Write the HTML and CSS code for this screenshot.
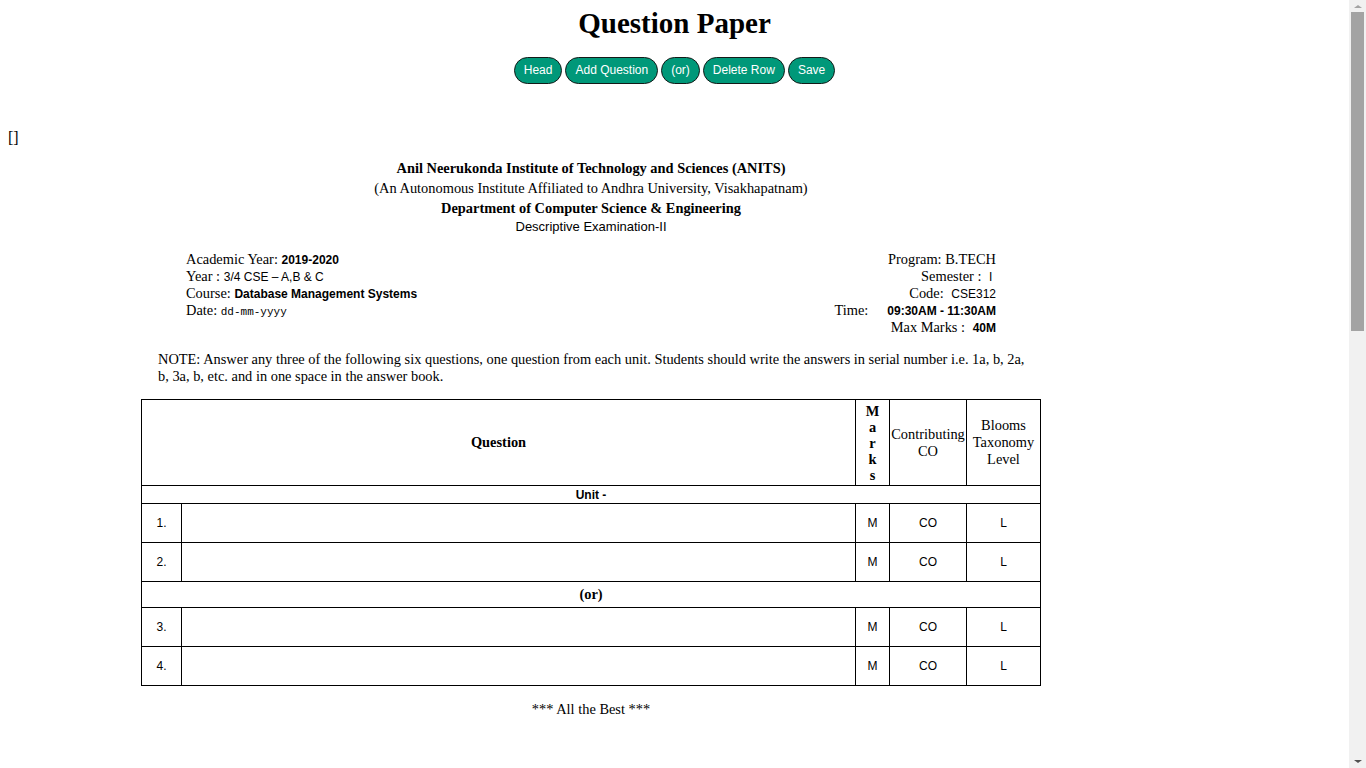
FILE: index.html
```html
<!DOCTYPE html>
<html>
<head>
<meta charset="utf-8">
<title>Question Paper</title>
<link rel="stylesheet" href="styles.css">
</head>
<body>
<h1 class="title">Question Paper</h1>
<div class="toolbar">
  <button class="btn">Head</button>
  <button class="btn">Add Question</button>
  <button class="btn">(or)</button>
  <button class="btn">Delete Row</button>
  <button class="btn">Save</button>
</div>
<p class="bracket">[]</p>
<div class="paper">
  <div class="inst">
    <div class="inst-name">Anil Neerukonda Institute of Technology and Sciences (ANITS)</div>
    <div class="inst-sub">(An Autonomous Institute Affiliated to Andhra University, Visakhapatnam)</div>
    <div class="inst-dept">Department of Computer Science &amp; Engineering</div>
    <div class="inst-exam">Descriptive Examination-II</div>
  </div>
  <div class="info">
    <div class="info-left">
      <div class="info-row">Academic Year: <span class="sans bold">2019-2020</span></div>
      <div class="info-row">Year : <span class="sans">3/4 CSE – A,B &amp; C</span></div>
      <div class="info-row">Course: <span class="sans bold">Database Management Systems</span></div>
      <div class="info-row">Date: <span class="mono">dd-mm-yyyy</span></div>
    </div>
    <div class="info-right">
      <div class="info-row">Program: B.TECH</div>
      <div class="info-row">Semester : <span class="sans gap">I</span>&nbsp;</div>
      <div class="info-row">Code: <span class="sans gap">CSE312</span></div>
      <div class="info-row">Time:<span class="sans bold wide">09:30AM - 11:30AM</span></div>
      <div class="info-row">Max Marks : <span class="sans bold gap">40M</span></div>
    </div>
  </div>
  <p class="note">NOTE: Answer any three of the following six questions, one question from each unit. Students should write the answers in serial number i.e. 1a, b, 2a, b, 3a, b, etc. and in one space in the answer book.</p>
  <table class="qtable">
    <colgroup>
      <col class="c-no">
      <col class="c-q">
      <col class="c-m">
      <col class="c-co">
      <col class="c-bl">
    </colgroup>
    <thead>
      <tr class="head-row">
        <th colspan="2">Question</th>
        <th><div class="marks-v">M<br>a<br>r<br>k<br>s</div></th>
        <td>Contributing CO</td>
        <td>Blooms Taxonomy Level</td>
      </tr>
    </thead>
    <tbody>
      <tr class="unit-row"><td colspan="5">Unit -</td></tr>
      <tr class="q-row"><td>1.</td><td></td><td>M</td><td>CO</td><td>L</td></tr>
      <tr class="q-row"><td>2.</td><td></td><td>M</td><td>CO</td><td>L</td></tr>
      <tr class="or-row"><td colspan="5">(or)</td></tr>
      <tr class="q-row"><td>3.</td><td></td><td>M</td><td>CO</td><td>L</td></tr>
      <tr class="q-row"><td>4.</td><td></td><td>M</td><td>CO</td><td>L</td></tr>
    </tbody>
  </table>
  <p class="best">*** All the Best ***</p>
</div>
<div class="page-end"></div>
<div class="scrollbar">
  <span class="sb-arrow sb-up"></span>
  <span class="sb-thumb"></span>
  <span class="sb-arrow sb-down"></span>
</div>
</body>
</html>
```
FILE: styles.css
```css
body {
  margin: 0 25px 8px 8px;
  font-family: "Liberation Serif", "Times New Roman", serif;
  font-size: 14.4px;
  color: #000;
  background: #fff;
}
.title {
  margin: 6px 0 0;
  font-size: 29px;
  line-height: 34px;
  font-weight: bold;
  text-align: center;
}
.toolbar {
  margin-top: 17px;
  display: flex;
  justify-content: center;
  gap: 3px;
}
.btn {
  font-family: "Liberation Sans", Arial, sans-serif;
  font-size: 12px;
  line-height: 15px;
  height: 27px;
  padding: 0 9px;
  color: #fff;
  background: #009879;
  border: 1px solid #141a18;
  border-radius: 14px;
  cursor: pointer;
}
.bracket {
  margin: 45px 0 11px;
  font-size: 16px;
  line-height: 18px;
}
.paper {
  width: 900px;
  margin-left: 133px;
}
.inst {
  text-align: center;
  line-height: 20px;
}
.inst-name, .inst-dept {
  font-weight: bold;
}
.inst-exam {
  font-family: "Liberation Sans", Arial, sans-serif;
  font-size: 13px;
  line-height: 18px;
}
.info {
  display: flex;
  justify-content: space-between;
  padding: 0 45px;
  margin-top: 15px;
}
.info-row {
  height: 17px;
  line-height: 17px;
  white-space: nowrap;
}
.info-row span {
  line-height: 12px;
}
.info-right {
  text-align: right;
}
.sans {
  font-family: "Liberation Sans", Arial, sans-serif;
  font-size: 12px;
}
.bold {
  font-weight: bold;
}
.mono {
  font-family: "Liberation Mono", "Courier New", monospace;
  font-size: 11px;
}
.gap {
  margin-left: 4px;
}
.wide {
  margin-left: 19px;
}
.note {
  margin: 15px 6px 14px 17px;
  line-height: 17px;
}
.qtable {
  width: 900px;
  table-layout: fixed;
  border-collapse: collapse;
}
.c-no { width: 40px; }
.c-m { width: 34px; }
.c-co { width: 77px; }
.c-bl { width: 74px; }
.qtable th,
.qtable td {
  border: 1px solid #000;
  padding: 0 1px;
  text-align: center;
  vertical-align: middle;
  line-height: 17px;
}
.head-row th,
.head-row td {
  height: 85px;
  padding: 0 1px;
}
.marks-v {
  line-height: 16px;
  font-weight: bold;
}
.unit-row td {
  height: 17px;
  font-family: "Liberation Sans", Arial, sans-serif;
  font-size: 12px;
  font-weight: bold;
  line-height: 14px;
}
.or-row td {
  height: 25px;
  font-weight: bold;
}
.q-row td {
  height: 38px;
  font-family: "Liberation Sans", Arial, sans-serif;
  font-size: 12px;
}
.best {
  margin: 15px 0 0;
  text-align: center;
  line-height: 17px;
}
.page-end {
  height: 1060px;
}
.scrollbar {
  position: fixed;
  top: 0;
  right: 0;
  width: 17px;
  height: 100%;
  background: #f1f1f1;
}
.sb-thumb {
  position: absolute;
  left: 2px;
  top: 12px;
  width: 13px;
  height: 319px;
  background: #a3a3a3;
}
.sb-arrow {
  position: absolute;
  left: 5px;
  width: 0;
  height: 0;
  border-left: 4px solid transparent;
  border-right: 4px solid transparent;
}
.sb-up {
  top: 5px;
  border-bottom: 3px solid #a3a3a3;
}
.sb-down {
  bottom: 5px;
  border-top: 3px solid #505050;
}
```
